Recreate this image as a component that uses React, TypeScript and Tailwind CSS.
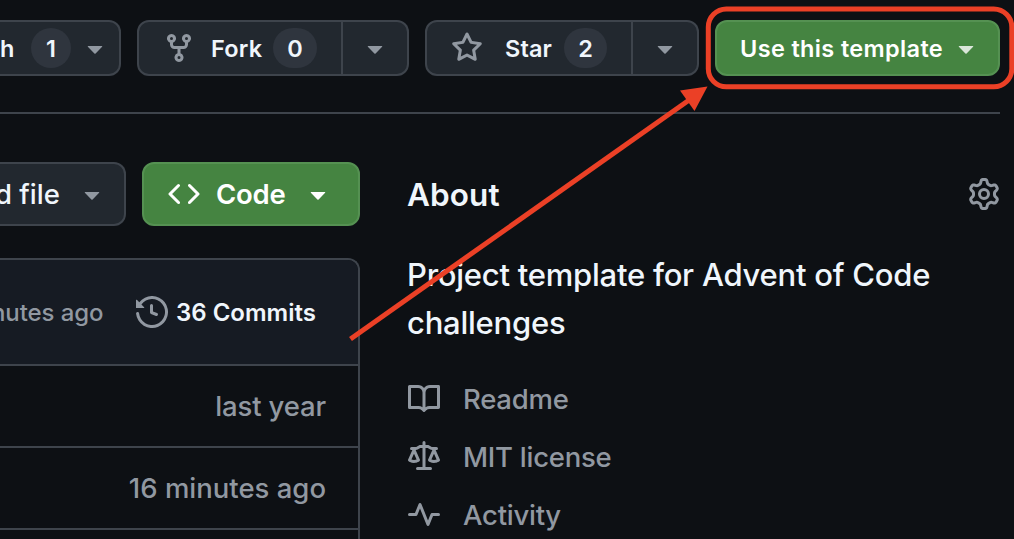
import type { ReactNode } from "react";

const paths = {
  fork: "M5 5.372v.878c0 .414.336.75.75.75h4.5a.75.75 0 0 0 .75-.75v-.878a2.25 2.25 0 1 1 1.5 0v.878a2.25 2.25 0 0 1-2.25 2.25h-1.5v2.128a2.251 2.251 0 1 1-1.5 0V8.5h-1.5A2.25 2.25 0 0 1 3.5 6.25v-.878a2.25 2.25 0 1 1 1.5 0ZM5 3.25a.75.75 0 1 0-1.5 0 .75.75 0 0 0 1.5 0Zm6.75.75a.75.75 0 1 0 0-1.5.75.75 0 0 0 0 1.5Zm-3 8.75a.75.75 0 1 0-1.5 0 .75.75 0 0 0 1.5 0Z",
  star: "M8 .25a.75.75 0 0 1 .673.418l1.882 3.815 4.21.612a.75.75 0 0 1 .416 1.279l-3.046 2.97.719 4.192a.751.751 0 0 1-1.088.791L8 12.347l-3.766 1.98a.75.75 0 0 1-1.088-.79l.72-4.194L.818 6.374a.75.75 0 0 1 .416-1.28l4.21-.611L7.327.668A.75.75 0 0 1 8 .25Zm0 2.445L6.615 5.5a.75.75 0 0 1-.564.41l-3.097.45 2.24 2.184a.75.75 0 0 1 .216.664l-.528 3.084 2.769-1.456a.75.75 0 0 1 .698 0l2.77 1.456-.53-3.084a.75.75 0 0 1 .216-.664l2.24-2.183-3.096-.45a.75.75 0 0 1-.564-.41L8 2.694Z",
  caret: "m4.427 7.427 3.396 3.396a.25.25 0 0 0 .354 0l3.396-3.396A.25.25 0 0 0 11.396 7H4.604a.25.25 0 0 0-.177.427Z",
  code: "m11.28 3.22 4.25 4.25a.75.75 0 0 1 0 1.06l-4.25 4.25a.749.749 0 0 1-1.275-.326.749.749 0 0 1 .215-.734L13.94 8l-3.72-3.72a.749.749 0 0 1 .326-1.275.749.749 0 0 1 .734.215Zm-6.56 0a.751.751 0 0 1 1.042.018.751.751 0 0 1 .018 1.042L2.06 8l3.72 3.72a.749.749 0 0 1-.326 1.275.749.749 0 0 1-.734-.215L.47 8.53a.75.75 0 0 1 0-1.06Z",
  history: "m.427 1.927 1.215 1.215a8.002 8.002 0 1 1-1.6 5.685.75.75 0 1 1 1.493-.154 6.5 6.5 0 1 0 1.18-4.458l1.358 1.358A.25.25 0 0 1 3.896 6H.25A.25.25 0 0 1 0 5.75V2.104a.25.25 0 0 1 .427-.177ZM7.75 4a.75.75 0 0 1 .75.75v2.992l2.028.812a.75.75 0 0 1-.557 1.392l-2.5-1A.751.751 0 0 1 7 8.25v-3.5A.75.75 0 0 1 7.75 4Z",
  book: "M0 1.75A.75.75 0 0 1 .75 1h4.253c1.227 0 2.317.59 3 1.501A3.743 3.743 0 0 1 11.006 1h4.245a.75.75 0 0 1 .75.75v10.5a.75.75 0 0 1-.75.75h-4.507a2.25 2.25 0 0 0-1.591.659l-.622.621a.75.75 0 0 1-1.06 0l-.622-.621A2.25 2.25 0 0 0 5.258 13H.75a.75.75 0 0 1-.75-.75Zm7.251 10.324.004-5.073-.002-2.253A2.25 2.25 0 0 0 5.003 2.5H1.5v9h3.757a3.75 3.75 0 0 1 1.994.574ZM8.755 4.75l-.004 7.322a3.752 3.752 0 0 1 1.992-.572H14.5v-9h-3.495a2.25 2.25 0 0 0-2.25 2.25Z",
  law: "M8.75.75V2h.985c.304 0 .603.08.867.231l1.29.736c.038.022.08.033.124.033h2.234a.75.75 0 0 1 0 1.5h-.427l2.111 4.692a.75.75 0 0 1-.154.838l-.53-.53.529.531-.001.002-.002.002-.006.006-.006.005-.01.01-.045.04c-.21.176-.441.327-.686.45C14.556 10.78 13.88 11 13 11a4.498 4.498 0 0 1-2.023-.454 3.544 3.544 0 0 1-.686-.45l-.045-.04-.016-.015-.006-.006-.004-.004v-.001a.75.75 0 0 1-.154-.838L12.178 4.5h-.162c-.305 0-.604-.079-.868-.231l-1.29-.736a.245.245 0 0 0-.124-.033H8.75V13h2.5a.75.75 0 0 1 0 1.5h-6.5a.75.75 0 0 1 0-1.5h2.5V3.5h-.984a.245.245 0 0 0-.124.033l-1.289.737c-.265.15-.564.23-.869.23h-.162l2.112 4.692a.75.75 0 0 1-.154.838l-.53-.53.529.531-.001.002-.002.002-.006.006-.016.015-.045.04c-.21.176-.441.327-.686.45C4.556 10.78 3.88 11 3 11a4.498 4.498 0 0 1-2.023-.454 3.544 3.544 0 0 1-.686-.45l-.045-.04-.016-.015-.006-.006-.004-.004v-.001a.75.75 0 0 1-.154-.838L2.178 4.5H1.75a.75.75 0 0 1 0-1.5h2.234a.249.249 0 0 0 .125-.033l1.288-.737c.265-.15.564-.23.869-.23h.984V.75a.75.75 0 0 1 1.5 0Zm2.945 8.477c.285.135.718.273 1.305.273s1.02-.138 1.305-.273L13 6.327Zm-10 0c.285.135.718.273 1.305.273s1.02-.138 1.305-.273L3 6.327Z",
  pulse: "M6 2c.306 0 .582.187.696.471L10 10.731l1.304-3.26A.751.751 0 0 1 12 7h3.25a.75.75 0 0 1 0 1.5h-2.742l-1.812 4.528a.751.751 0 0 1-1.392 0L6 4.77 4.696 8.03A.75.75 0 0 1 4 8.5H.75a.75.75 0 0 1 0-1.5h2.742l1.812-4.529A.751.751 0 0 1 6 2Z",
  gear: "M8 0a8.2 8.2 0 0 1 .701.031C9.444.095 9.99.645 10.16 1.29l.288 1.107c.018.066.079.158.212.224.231.114.454.243.668.386.123.082.233.09.299.071l1.103-.303c.644-.176 1.392.021 1.82.63.27.385.506.792.704 1.218.315.675.111 1.422-.364 1.891l-.814.806c-.049.048-.098.147-.088.294.016.257.016.515 0 .772-.01.147.038.246.088.294l.814.806c.475.469.679 1.216.364 1.891a7.977 7.977 0 0 1-.704 1.217c-.428.61-1.176.807-1.82.63l-1.102-.302c-.067-.019-.177-.011-.3.071a5.909 5.909 0 0 1-.668.386c-.133.066-.194.158-.211.224l-.29 1.106c-.168.646-.715 1.196-1.458 1.26a8.006 8.006 0 0 1-1.402 0c-.743-.064-1.289-.614-1.458-1.26l-.289-1.106c-.018-.066-.079-.158-.212-.224a5.738 5.738 0 0 1-.668-.386c-.123-.082-.233-.09-.299-.071l-1.103.303c-.644.176-1.392-.021-1.82-.63a8.12 8.12 0 0 1-.704-1.218c-.315-.675-.111-1.422.363-1.891l.815-.806c.05-.048.098-.147.088-.294a6.214 6.214 0 0 1 0-.772c.01-.147-.038-.246-.088-.294l-.815-.806C.635 6.045.431 5.298.746 4.623a7.92 7.92 0 0 1 .704-1.217c.428-.61 1.176-.807 1.82-.63l1.102.302c.067.019.177.011.3-.071.214-.143.437-.272.668-.386.133-.066.194-.158.211-.224l.29-1.106C6.009.645 6.556.095 7.299.03 7.53.01 7.764 0 8 0Zm-.571 1.525c-.036.003-.108.036-.137.146l-.289 1.105c-.147.561-.549.967-.998 1.189-.173.086-.34.183-.5.29-.417.278-.97.423-1.529.27l-1.103-.303c-.109-.03-.175.016-.195.045-.22.312-.412.644-.573.99-.014.031-.021.11.059.19l.815.806c.411.406.562.957.53 1.456a4.709 4.709 0 0 0 0 .582c.032.499-.119 1.05-.53 1.456l-.815.806c-.081.08-.073.159-.059.19.162.346.353.677.573.989.02.03.085.076.195.046l1.102-.303c.56-.153 1.113-.008 1.53.27.161.107.328.204.501.29.447.222.85.629.997 1.189l.289 1.105c.029.109.101.143.137.146a6.6 6.6 0 0 0 1.142 0c.036-.003.108-.036.137-.146l.289-1.105c.147-.561.549-.967.998-1.189.173-.086.34-.183.5-.29.417-.278.97-.423 1.529-.27l1.103.303c.109.029.175-.016.195-.045.22-.313.411-.644.573-.99.014-.031.021-.11-.059-.19l-.815-.806c-.411-.406-.562-.957-.53-1.456a4.709 4.709 0 0 0 0-.582c-.032-.499.119-1.05.53-1.456l.815-.806c.081-.08.073-.159.059-.19a6.464 6.464 0 0 0-.573-.989c-.02-.03-.085-.076-.195-.046l-1.102.303c-.56.153-1.113.008-1.53-.27a4.44 4.44 0 0 0-.501-.29c-.447-.222-.85-.629-.997-1.189l-.289-1.105c-.029-.11-.101-.143-.137-.146a6.6 6.6 0 0 0-1.142 0ZM11 8a3 3 0 1 1-6 0 3 3 0 0 1 6 0ZM9.5 8a1.5 1.5 0 1 0-3.001.001A1.5 1.5 0 0 0 9.5 8Z",
};

function Icon({ name, className = "text-[#9198a1]" }: { name: keyof typeof paths; className?: string }) {
  return (
    <svg viewBox="0 0 16 16" className={`size-8 shrink-0 ${className}`} fill="currentColor" aria-hidden="true">
      <path d={paths[name]} />
    </svg>
  );
}

function Counter({ children, className }: { children: ReactNode; className: string }) {
  return (
    <span className={`flex h-10 shrink-0 items-center justify-center rounded-full bg-[#2f353e] pt-0.5 ${className}`}>
      {children}
    </span>
  );
}

const grayButton = "flex items-center border-2 border-[#3e444c] bg-[#22282f] text-left text-[#f0f6fc] whitespace-nowrap";
const greenButton = "flex items-center rounded-xl border-2 border-[#559152] bg-[#458441] text-left text-white whitespace-nowrap";

function SplitButton({ icon, label, count, className, labelClass, counterClass }: {
  icon: "fork" | "star";
  label: string;
  count: number;
  className: string;
  labelClass: string;
  counterClass: string;
}) {
  return (
    <div className={`flex h-14 shrink-0 ${className}`}>
      <button className={`${grayButton} min-w-0 flex-1 rounded-l-xl pl-6`}>
        <Icon name={icon} />
        <span className={`pt-0.5 ${labelClass}`}>{label}</span>
        <Counter className={counterClass}>{count}</Counter>
      </button>
      <button className={`${grayButton} w-[66px] rounded-r-xl border-l-0 pl-4`}>
        <Icon name="caret" />
      </button>
    </div>
  );
}

function Actions() {
  return (
    <div className="mr-[14px] flex h-[114px] border-b-2 border-[#3e444c] pt-5 text-[23.5px] font-semibold">
      <button className={`${grayButton} h-14 w-[121px] shrink-0 rounded-r-xl border-l-0`}>
        <span className="w-[31px] pt-0.5">h</span>
        <Counter className="w-10">1</Counter>
        <Icon name="caret" className="ml-2 text-[#9198a1]" />
      </button>
      <SplitButton icon="fork" label="Fork" count={0} className="ml-4 w-[272px]" labelClass="ml-4 w-[62px] tracking-[0.2px]" counterClass="w-11" />
      <SplitButton icon="star" label="Star" count={2} className="ml-4 w-[274px]" labelClass="ml-[22px] w-[59px] tracking-[0.1px]" counterClass="w-[43px]" />
      <button className={`${greenButton} ml-4 h-14 w-[285px] pl-[23px]`}>
        <span className="w-[210px] pt-0.5 tracking-[0.35px]">Use this template</span>
        <Icon name="caret" className="text-[#dae6d9]" />
      </button>
    </div>
  );
}

function Files() {
  return (
    <section className="w-[360px] shrink-0">
      <div className="flex h-16 text-[27.5px]">
        <button className={`${grayButton} w-[126px] rounded-r-xl border-l-0 font-medium`}>
          <span className="-ml-[5px] w-[81px] pt-0.5">d file</span>
          <Icon name="caret" />
        </button>
        <button className={`${greenButton} ml-4 w-[218px] pl-6 font-semibold`}>
          <Icon name="code" className="text-white" />
          <span className="ml-4 w-[86px] pt-0.5 tracking-[-0.2px]">Code</span>
          <Icon name="caret" className="text-white" />
        </button>
      </div>
      <div className="mt-8 h-[290px] rounded-tr-xl border-t-2 border-r-2 border-[#3e444c] whitespace-nowrap">
        <div className="flex h-[106px] items-center rounded-tr-[10px] border-b-2 border-[#3e444c] bg-[#161b23]">
          <span className="-ml-[9px] w-[145px] pt-0.5 text-[24px] font-[450] tracking-[-0.1px] text-[#9198a1]">nutes ago</span>
          <Icon name="history" />
          <span className="ml-2 pt-0.5 text-[24px] font-semibold text-[#f0f6fc]">36 Commits</span>
        </div>
        <div className="flex h-[82px] items-center justify-end border-b-2 border-[#3e444c] pt-0.5 pr-8 text-[27.5px] font-[450] tracking-[-0.15px] text-[#9198a1]">
          last year
        </div>
        <div className="flex h-[82px] items-center justify-end border-b-2 border-[#3e444c] pt-0.5 pr-8 text-[27.5px] font-[450] text-[#9198a1]">
          16 minutes ago
        </div>
      </div>
    </section>
  );
}

function About() {
  return (
    <aside className="ml-12 w-[592px] shrink-0 whitespace-nowrap">
      <div className="flex h-16 items-center justify-between">
        <h2 className="-ml-px pt-0.5 text-[31.5px] font-semibold tracking-[0.1px] text-[#f0f6fc]">About</h2>
        <Icon name="gear" />
      </div>
      <p className="mt-[25px] -ml-px text-[31px] leading-[48px] font-[450] tracking-[-0.24px] text-[#f0f6fc]">
        Project template for Advent of Code
        <br />
        challenges
      </p>
      <ul className="mt-[23px] text-[27.5px] font-[450] tracking-[-0.25px] text-[#9198a1]">
        <li className="flex h-[58px] items-center"><Icon name="book" /><span className="ml-[23px] pt-0.5">Readme</span></li>
        <li className="flex h-[58px] items-center"><Icon name="law" /><span className="ml-[23px] pt-0.5">MIT license</span></li>
        <li className="flex h-[58px] items-center"><Icon name="pulse" /><span className="ml-[23px] pt-0.5">Activity</span></li>
      </ul>
    </aside>
  );
}

export default function App() {
  return (
    <main className="relative h-[539px] w-[1014px] overflow-hidden bg-[#0d1014] font-['Inter','Liberation_Sans',sans-serif]">
      <Actions />
      <div className="flex pt-12">
        <Files />
        <About />
      </div>
      <svg className="pointer-events-none absolute inset-0" width="1014" height="539" fill="none" aria-hidden="true">
        <rect x="708.3" y="9" width="303.5" height="77.8" rx="18" stroke="#eb4026" strokeWidth="5" />
        <path d="M350.5 339 L692 98" stroke="#eb4026" strokeWidth="5" />
        <path d="M707.5 86.5 L680 90.5 L694.5 111 Z" fill="#eb4026" />
      </svg>
    </main>
  );
}
